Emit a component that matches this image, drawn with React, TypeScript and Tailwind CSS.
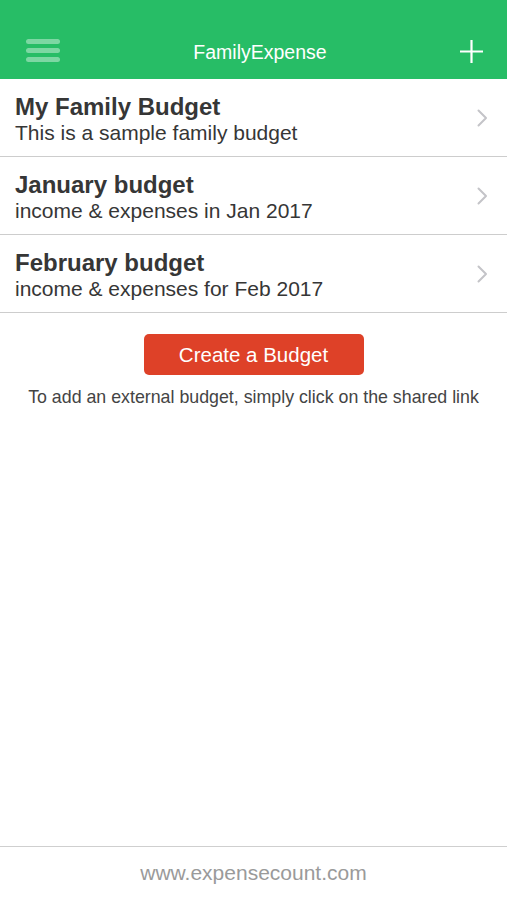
import React from 'react';

const budgets = [
  { title: 'My Family Budget', subtitle: 'This is a sample family budget' },
  { title: 'January budget', subtitle: 'income & expenses in Jan 2017' },
  { title: 'February budget', subtitle: 'income & expenses for Feb 2017' },
];

const Chevron = () => (
  <svg width="11" height="18" viewBox="0 0 11 18" fill="none" className="flex-shrink-0">
    <path d="M1.5 1.5 L9 9 L1.5 16.5" stroke="#c4c4c8" strokeWidth="2" strokeLinecap="round" strokeLinejoin="round" />
  </svg>
);

const App = () => {
  return (
    <div className="h-[900px] w-full flex flex-col bg-white font-['Liberation_Sans',Arial,sans-serif]">
      <header className="h-[79px] bg-[#27bd66] flex items-end pb-[15px] px-[26px] relative">
        <div className="flex flex-col gap-[4px] w-[34px] mb-[2px]">
          <span className="h-[5px] rounded-full bg-white/40" />
          <span className="h-[5px] rounded-full bg-white/40" />
          <span className="h-[5px] rounded-full bg-white/40" />
        </div>
        <h1 className="flex-1 text-center text-white text-[19.5px] leading-[24px]">FamilyExpense</h1>
        <svg width="23" height="23" viewBox="0 0 23 23" className="mr-[-2px] mb-[1px]">
          <path d="M11.5 0 V23 M0 11.5 H23" stroke="#fff" strokeWidth="2.2" />
        </svg>
      </header>

      <main className="flex-1 flex flex-col">
        {budgets.map((b) => (
          <div key={b.title} className="h-[78px] border-b-[1.5px] border-[#cdcdcd] flex items-center pl-[15px] pr-[19px]">
            <div className="flex-1 text-[#363636] pt-[3px]">
              <div className="text-[24px] leading-[27px] font-bold">{b.title}</div>
              <div className="text-[21px] leading-[25px]">{b.subtitle}</div>
            </div>
            <Chevron />
          </div>
        ))}

        <div className="flex flex-col items-center pt-[21px]">
          <button className="w-[220px] h-[41px] rounded-[5px] bg-[#de4128] text-white text-[20.5px] leading-[24px]">
            Create a Budget
          </button>
          <p className="mt-[11px] text-[17.8px] leading-[22px] text-[#444444]">
            To add an external budget, simply click on the shared link
          </p>
        </div>
      </main>

      <footer className="h-[54px] border-t-[1.5px] border-[#cfcfcf] flex items-center justify-center">
        <span className="text-[21px] text-[#9a9a9a] pb-[2px]">www.expensecount.com</span>
      </footer>
    </div>
  );
};

export default App;
